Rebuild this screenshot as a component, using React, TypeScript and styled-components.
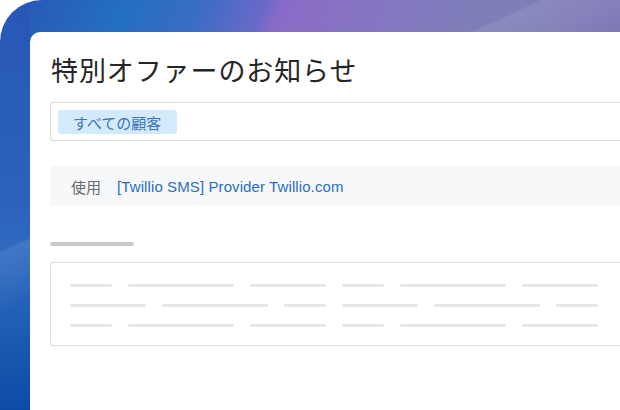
import React from 'react';
import styled, {createGlobalStyle} from 'styled-components';

const GlobalStyle = createGlobalStyle`
  html, body {
    margin: 0;
    padding: 0;
    background: #ffffff;
  }
  body {
    font-family: 'Liberation Sans', 'Noto Sans CJK JP', sans-serif;
  }
`;

// skeleton widths for the preview box, one array per line
const PREVIEW_LINES: number[][] = [
  [42, 106, 76, 42, 106, 76],
  [76, 106, 42, 76, 106, 42],
  [42, 106, 76, 42, 106, 76]
];

const Backdrop = styled.div`
  width: 620px;
  height: 410px;
  box-sizing: border-box;
  padding: 32px 0 0 30px;
  overflow: hidden;
  border-top-left-radius: 42px;
  background:
    linear-gradient(
      155deg,
      rgba(255, 255, 255, 0) 35.8%,
      rgba(255, 255, 255, 0.09) 36.4%,
      rgba(255, 255, 255, 0.05) 41%,
      rgba(255, 255, 255, 0) 45%
    ),
    linear-gradient(
      to bottom,
      #2857b6 0%,
      #2a5db9 30%,
      #2d63bc 52%,
      #3169bf 60%,
      #2864ba 70%,
      #0c4ca6 100%
    ) left top / 30px 100% no-repeat,
    linear-gradient(
      115deg,
      #2857b6 2%,
      #2470c0 16%,
      #3a6cc4 25%,
      #6a6ac8 33%,
      #8769c8 35%,
      #8a6dc6 37%,
      #8478c0 50%,
      #7e7fb9 60%,
      #7f7ab8 77%,
      #7d76b6 100%
    );
`;

const Card = styled.div`
  height: 100%;
  box-sizing: border-box;
  background: #ffffff;
  border-top-left-radius: 10px;
  padding: 19px 0 0 20px;
  display: flex;
  flex-direction: column;
`;

const Title = styled.h1`
  margin: 0 0 14px 1px;
  font-family: 'Noto Sans CJK JP', sans-serif;
  font-size: 27px;
  letter-spacing: 0.9px;
  line-height: 37px;
  font-weight: 400;
  color: #262626;
  white-space: nowrap;
`;

const RecipientField = styled.div`
  height: 39px;
  box-sizing: border-box;
  border: 1px solid #dcdcdc;
  border-right: none;
  border-radius: 4px 0 0 4px;
  padding: 7px 0 0 7px;
`;

const Tag = styled.span`
  display: inline-flex;
  align-items: center;
  height: 24px;
  padding: 0 16px 0 15px;
  border-radius: 3px;
  background: #d3eafb;
  color: #3b73bb;
  font-family: 'Noto Sans CJK JP', sans-serif;
  font-size: 15px;
`;

const ProviderRow = styled.div`
  margin-top: 25px;
  height: 40px;
  display: flex;
  align-items: center;
  gap: 16px;
  padding-left: 21px;
  border-radius: 4px 0 0 4px;
  background: #f6f8fa;
`;

const RowLabel = styled.span`
  font-family: 'Noto Sans CJK JP', sans-serif;
  font-size: 15px;
  color: #6a6a6a;
`;

const ProviderLink = styled.a`
  font-size: 15px;
  letter-spacing: 0.1px;
  color: #2b6ec1;
  text-decoration: none;
`;

const SectionBar = styled.div`
  margin-top: 36px;
  width: 84px;
  height: 4px;
  border-radius: 2px;
  background: #c9c9c9;
`;

const PreviewBox = styled.div`
  margin-top: 16px;
  height: 84px;
  box-sizing: border-box;
  border: 1px solid #dcdcdc;
  border-right: none;
  border-radius: 4px 0 0 4px;
  padding: 21px 0 0 19px;
  display: flex;
  flex-direction: column;
  gap: 17px;
`;

const SkeletonLine = styled.div`
  display: flex;
  gap: 16px;
`;

const SkeletonBit = styled.div<{$w: number}>`
  width: ${p => p.$w}px;
  height: 3px;
  border-radius: 2px;
  background: #e6e6e6;
`;

const App = () => {
  return (
    <>
      <GlobalStyle />
      <Backdrop>
        <Card>
          <Title>特別オファーのお知らせ</Title>
          <RecipientField>
            <Tag>すべての顧客</Tag>
          </RecipientField>
          <ProviderRow>
            <RowLabel>使用</RowLabel>
            <ProviderLink href="#">[Twillio SMS] Provider Twillio.com</ProviderLink>
          </ProviderRow>
          <SectionBar />
          <PreviewBox>
            {PREVIEW_LINES.map((line, i) => (
              <SkeletonLine key={i}>
                {line.map((w, j) => (
                  <SkeletonBit key={j} $w={w} />
                ))}
              </SkeletonLine>
            ))}
          </PreviewBox>
        </Card>
      </Backdrop>
    </>
  );
};

export default App;
